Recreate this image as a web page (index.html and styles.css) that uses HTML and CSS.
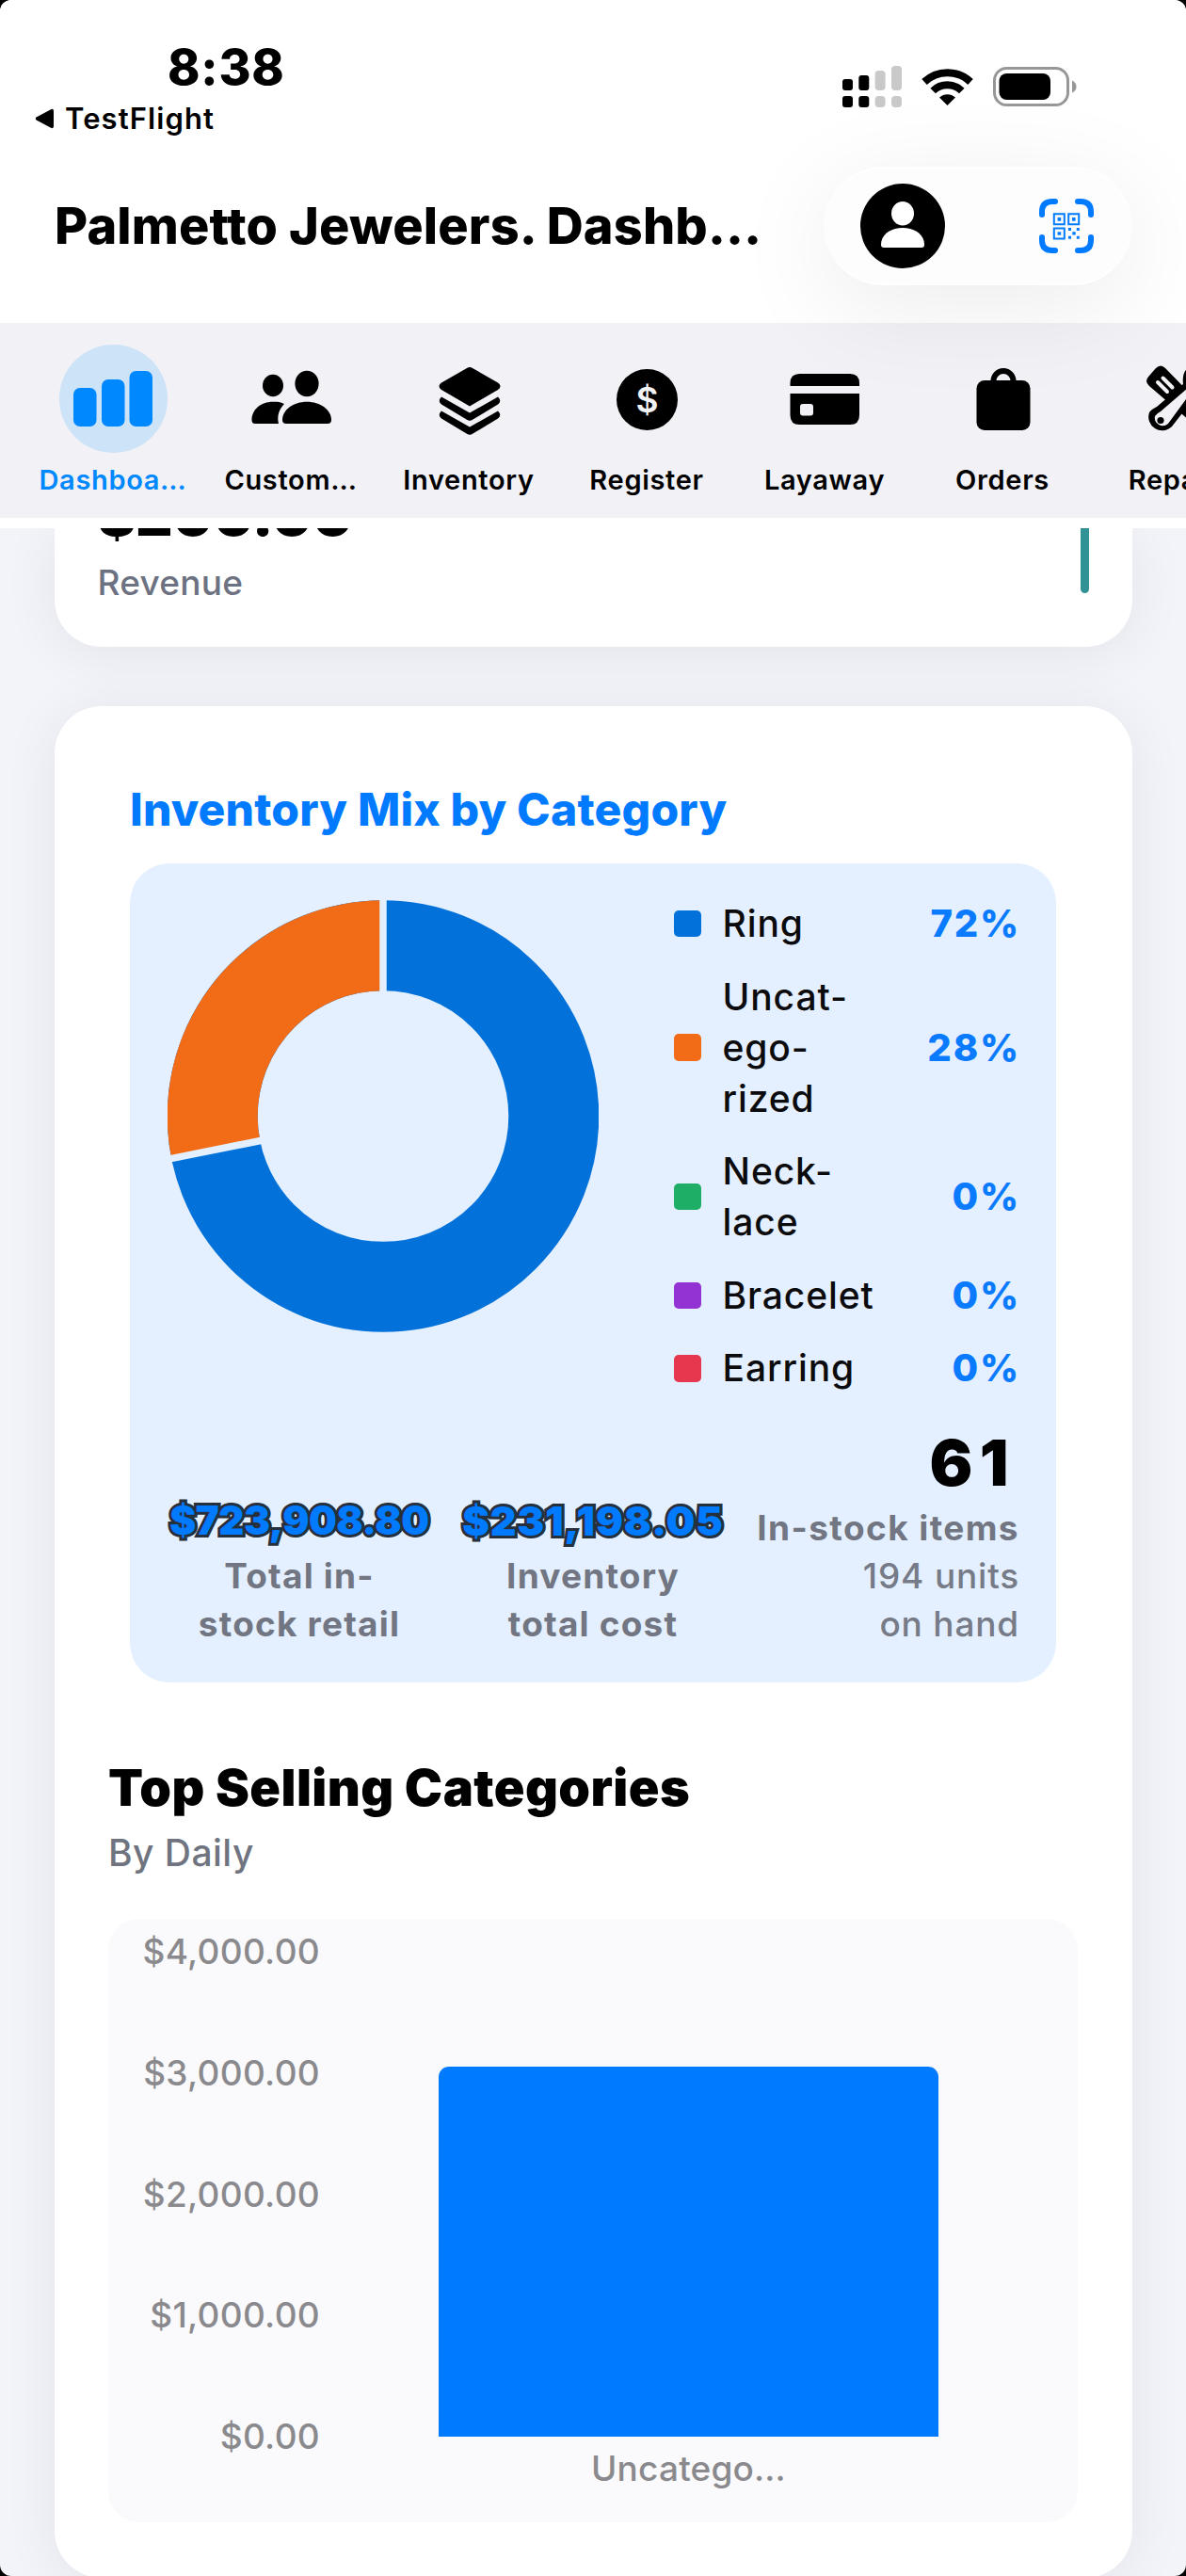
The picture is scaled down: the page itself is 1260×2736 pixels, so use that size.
FILE: index.html
```html
<!DOCTYPE html>
<html lang="en">
<head>
    <meta charset="UTF-8">
    <meta name="viewport" content="width=device-width, initial-scale=1.0">
    <title>Palmetto Jewelers. Dashboard</title>
    <link rel="stylesheet" href="styles.css">
</head>
<body>
<div class="app">
    <header class="header">
        <div class="status">
            <div class="status-left">
                <div class="time">8:38</div>
                <div class="back">
                    <svg width="21" height="22" viewBox="0 0 21 22"><path d="M2 9.2 L17 1.2 Q20 0 20 3 V19 Q20 22 17 20.8 L2 12.8 Q-.5 11 2 9.2Z"/></svg>
                    <span>TestFlight</span>
                </div>
            </div>
            <div class="status-icons">
                <svg width="63" height="44" viewBox="0 0 63 44">
                    <rect x="0" y="14" width="11" height="12" rx="3"/>
                    <rect x="17.3" y="10" width="11" height="16" rx="3"/>
                    <rect x="0" y="32" width="11" height="12" rx="3"/>
                    <rect x="17.3" y="32" width="11" height="12" rx="3"/>
                    <g fill="#c9c9c9">
                        <rect x="34.6" y="5" width="11" height="21" rx="4"/>
                        <rect x="52" y="0" width="11" height="26" rx="4"/>
                        <rect x="34.6" y="32" width="11" height="12" rx="4"/>
                        <rect x="52" y="32" width="11" height="12" rx="4"/>
                    </g>
                </svg>
                <svg width="55" height="40" viewBox="0 0 55 40">
                    <path d="M3 15 A35.5 35.5 0 0 1 52 15" fill="none" stroke="#000" stroke-width="8"/>
                    <path d="M12.2 24.5 A22 22 0 0 1 42.8 24.5" fill="none" stroke="#000" stroke-width="8"/>
                    <path d="M27.5 40 L19 31.5 A12.5 12.5 0 0 1 36 31.5Z"/>
                </svg>
                <svg width="89" height="42" viewBox="0 0 89 42">
                    <rect x="1.5" y="1.5" width="78" height="39" rx="13" fill="none" stroke="#979797" stroke-width="3"/>
                    <rect x="6.5" y="7" width="54.5" height="28" rx="8"/>
                    <path d="M84 14.5 Q88.5 16.5 88.5 21 Q88.5 25.5 84 27.5Z" fill="#979797"/>
                </svg>
            </div>
        </div>
        <div class="toolbar">
            <h1 class="title">Palmetto Jewelers. Dashb…</h1>
            <div class="pill">
                <svg width="90" height="90" viewBox="0 0 90 90">
                    <circle cx="45" cy="45" r="45"/>
                    <ellipse cx="45" cy="31.7" rx="12" ry="12.7" fill="#fff"/>
                    <path d="M22 65 C22 54 32 47 45 47 S68 54 68 65 Q68 68 65 68 H25 Q22 68 22 65Z" fill="#fff"/>
                </svg>
                <svg width="58" height="58" viewBox="0 0 58 58" fill="none" stroke="#007aff">
                    <path d="M3 17 V14 Q3 3 14 3 H17 M41 3 H44 Q55 3 55 14 V17 M55 41 V44 Q55 55 44 55 H41 M17 55 H14 Q3 55 3 44 V41" stroke-width="6" stroke-linecap="round"/>
                    <path d="M15.8 16.3 H26.8 V27.3 H15.8Z M31.2 16.3 H42.2 V27.3 H31.2Z M15.8 31.4 H26.8 V42.4 H15.8Z" stroke-width="2"/>
                    <path d="M19.6 20.1 h3.6 v3.6 h-3.6z M35 20.1 h3.6 v3.6 h-3.6z M19.6 35.2 h3.6 v3.6 h-3.6z M31 31 h3v3h-3z M39.8 31 h3v3h-3z M35.3 35.2 h3.4v3.4h-3.4z M31 39.8 h3v3h-3z M39.8 39.8 h3v3h-3z" fill="#007aff" stroke="none"/>
                </svg>
            </div>
        </div>
    </header>

    <nav class="nav">
        <a class="nav-item active">
            <svg viewBox="0 0 115 115">
                <rect x="15" y="46" width="24.5" height="41" rx="7"/>
                <rect x="45" y="37" width="24.5" height="50" rx="7"/>
                <rect x="74.5" y="28" width="24.5" height="59" rx="7"/>
            </svg>
            <span>Dashboa…</span>
        </a>
        <a class="nav-item">
            <svg viewBox="0 0 115 115">
                <ellipse cx="38" cy="43.5" rx="11" ry="11.7"/>
                <ellipse cx="74" cy="41.5" rx="12.6" ry="13.7"/>
                <path d="M50 63 C45 60.5 42 60.7 38 60.7 C25 60.7 15.5 69 15.5 80 Q15.5 84 19 84 H44 C42 76 44.5 68.5 50 63Z"/>
                <path d="M48 80 C48 69 60 60.7 74 60.7 S100 69 100 80 Q100 84 96 84 H52 Q48 84 48 80Z"/>
            </svg>
            <span>Custom…</span>
        </a>
        <a class="nav-item">
            <svg viewBox="0 0 115 115">
                <path d="M55 25 Q58 23 61 25 L88 40.5 Q93 44 88 48 L58 65.5 L28 48 Q23 44 28 40.5Z"/>
                <path d="M28 55.5 L58 72.5 L88 55.5 Q92.5 60 88 63.5 L61 79.8 Q58 81.5 55 79.8 L28 63.5 Q23.5 60 28 55.5Z"/>
                <path d="M28 70.5 L58 87.5 L88 70.5 Q92.5 75 88 78.5 L61 94.8 Q58 96.5 55 94.8 L28 78.5 Q23.5 75 28 70.5Z"/>
            </svg>
            <span>Inventory</span>
        </a>
        <a class="nav-item">
            <svg viewBox="0 0 115 115">
                <circle cx="57.5" cy="58.5" r="32.5"/>
                <text class="dollar" x="57.5" y="71.5" text-anchor="middle">$</text>
            </svg>
            <span>Register</span>
        </a>
        <a class="nav-item">
            <svg viewBox="0 0 115 115">
                <path d="M20.5 44 V41 Q20.5 31 30.5 31 H84 Q94 31 94 41 V44Z"/>
                <path fill-rule="evenodd" d="M20.5 52 H94 V75 Q94 85 84 85 H30.5 Q20.5 85 20.5 75Z M34 63 Q31 63 31 66 V72.5 Q31 75.5 34 75.5 H42 Q45 75.5 45 72.5 V66 Q45 63 42 63Z"/>
            </svg>
            <span>Layaway</span>
        </a>
        <a class="nav-item">
            <svg viewBox="0 0 115 115">
                <rect x="29.5" y="38" width="57" height="53" rx="8.5"/>
                <path d="M47.5 40 V38.5 A10.5 10.5 0 0 1 68.5 38.5 V40" fill="none" stroke="#000" stroke-width="6"/>
            </svg>
            <span>Orders</span>
        </a>
        <a class="nav-item">
            <svg viewBox="0 0 115 115">
                <path d="M24 33 L31 25 Q36 20 41 25 L94 79 L80 92 L24 44 Q18 39 24 33Z"/>
                <path d="M33 40 L43 50 M38.5 35.5 L48.5 45.5" stroke="#f1f1f6" stroke-width="4" stroke-linecap="round"/>
                <path d="M24 72 Q26 69 32 66 L60 42 Q58 26 70 22 L88 42 Q84 52 72 56 L48 87 A14.5 14.5 0 0 1 24 72Z"/>
                <path d="M30 76 Q32 73 36 71 L64 47 L68 51 L44 84 A8.5 8.5 0 0 1 30 76Z" fill="#f1f1f6"/>
                <circle cx="36" cy="80.5" r="3.6"/>
            </svg>
            <span>Repairs</span>
        </a>
    </nav>

    <main class="content">
        <section class="card revenue">
            <div class="revenue-text">
                <div class="revenue-value">$200.00</div>
                <div class="revenue-label">Revenue</div>
            </div>
            <div class="revenue-bar"></div>
        </section>

        <section class="card main-card">
            <div class="mix">
                <h2 class="mix-title">Inventory Mix by Category</h2>
                <div class="mix-panel">
                    <div class="mix-row">
                        <svg class="donut" width="458" height="459" viewBox="-229 -229.5 458 459">
                            <g fill="none" stroke-width="96">
                                <circle r="181.3" stroke="#0272da"/>
                                <circle r="181.3" stroke="#f26c18" pathLength="100" stroke-dasharray="28.1 71.9" transform="rotate(168.7)"/>
                            </g>
                            <path d="M0 -120 V-232 M-117.7 23.5 L-228 45.6" stroke="#e4f0ff" stroke-width="7.5"/>
                        </svg>
                        <ul class="legend">
                            <li><i class="swatch blue"></i><span>Ring</span><b>72%</b></li>
                            <li><i class="swatch orange"></i><span>Uncat-<br>ego-<br>rized</span><b>28%</b></li>
                            <li><i class="swatch green"></i><span>Neck-<br>lace</span><b>0%</b></li>
                            <li><i class="swatch purple"></i><span>Bracelet</span><b>0%</b></li>
                            <li><i class="swatch red"></i><span>Earring</span><b>0%</b></li>
                        </ul>
                    </div>
                    <div class="totals">
                        <div class="total">
                            <div class="amount">$723,908.80</div>
                            <div class="total-label">Total in-<br>stock retail</div>
                        </div>
                        <div class="total">
                            <div class="amount cost">$231,198.05</div>
                            <div class="total-label">Inventory<br>total cost</div>
                        </div>
                        <div class="stock">
                            <div class="stock-count">61</div>
                            <div class="stock-label">In-stock items</div>
                            <div class="stock-units">194 units<br>on hand</div>
                        </div>
                    </div>
                </div>
            </div>

            <h2 class="top-title">Top Selling Categories</h2>
            <p class="top-sub">By Daily</p>
            <div class="chart">
                <div class="y-axis">
                    <span>$4,000.00</span>
                    <span>$3,000.00</span>
                    <span>$2,000.00</span>
                    <span>$1,000.00</span>
                    <span>$0.00</span>
                </div>
                <div class="plot">
                    <div class="plot-area"><div class="bar" style="height: 393px"></div></div>
                    <div class="x-label">Uncatego…</div>
                </div>
            </div>
        </section>
    </main>
</div>
</body>
</html>
```
FILE: styles.css
```css
* {
    box-sizing: border-box;
}

body {
    margin: 0;
    background: #000;
    font-family: Inter, "Liberation Sans", sans-serif;
    color: #000;
}

h1, h2, p, ul {
    margin: 0;
    padding: 0;
}

svg {
    display: block;
    flex: none;
}

.app {
    width: 1260px;
    height: 2736px;
    overflow: hidden;
    border-radius: 12px;
    background: #f3f4f9;
}

/* header */
.header {
    height: 343px;
    background: #fff;
}

.status {
    display: flex;
    justify-content: space-between;
    height: 177px;
    padding: 42px 116px 0 37px;
}

.time {
    margin-left: 141px;
    font-size: 52px;
    font-weight: 800;
    line-height: 60px;
    letter-spacing: 0.015em;
}

.back {
    display: flex;
    align-items: center;
    gap: 11px;
    margin-top: 4px;
    font-size: 31px;
    font-weight: 600;
    line-height: 40px;
    letter-spacing: 0.035em;
}

.status-icons {
    display: flex;
    align-items: center;
    gap: 21px;
    height: 44px;
    margin-top: 28px;
}

.toolbar {
    display: flex;
    align-items: center;
    justify-content: space-between;
    height: 126px;
    padding: 0 57px;
}

.title {
    padding-left: 1px;
    font-size: 54px;
    font-weight: 800;
    line-height: 64px;
    letter-spacing: 0.003em;
    white-space: nowrap;
}

.pill {
    position: relative;
    z-index: 2;
    display: flex;
    align-items: center;
    justify-content: space-between;
    width: 328px;
    height: 126px;
    padding: 0 41px 0 39px;
    border: 2px solid #fff;
    border-width: 2px 0;
    border-radius: 63px;
    background: #fdfdfd;
    box-shadow: 0 22px 110px rgba(0, 0, 0, 0.08);
}

/* navigation strip */
.nav {
    display: flex;
    gap: 30px;
    height: 218px;
    padding: 23px 0 0 40.5px;
    overflow: hidden;
    border-bottom: 11.5px solid #fff;
    background: #f1f1f6;
}

.nav-item {
    flex: none;
    width: 159px;
    font-size: 29px;
    font-weight: 600;
    line-height: 34px;
    letter-spacing: 0.023em;
    text-align: center;
    text-indent: 0.06em;
}

.nav-item svg {
    width: 115px;
    height: 115px;
    margin: 0 auto 12px;
}

.nav-item.active {
    color: #08f;
}

.nav-item.active svg {
    border-radius: 50%;
    background: #cde3f8;
    fill: #08f;
}

.dollar {
    font-size: 37px;
    font-weight: 600;
    letter-spacing: 0;
    fill: #f1f1f6;
}

/* cards */
.content {
    padding: 0 57.5px;
}

.card {
    border-radius: 50px;
    background: #fff;
    box-shadow: 0 6px 60px rgba(0, 0, 0, 0.07);
}

.revenue {
    display: flex;
    justify-content: space-between;
    height: 126px;
    padding: 0 46px;
    border-radius: 0 0 50px 50px;
    clip-path: inset(0 -80px -80px -80px);
}

/* scrolled half under the navigation */
.revenue-text {
    height: 126px;
    overflow: hidden;
}

.revenue-value {
    margin-top: -50px;
    font-size: 61px;
    font-weight: 900;
    line-height: 72px;
    letter-spacing: -0.002em;
}

.revenue-label {
    margin-top: 14px;
    font-size: 37px;
    font-weight: 500;
    line-height: 44px;
    letter-spacing: 0.006em;
    color: #6c7281;
}

.revenue-bar {
    width: 9px;
    height: 69px;
    border-radius: 0 0 5px 5px;
    background: #309295;
}

.main-card {
    height: 1988px;
    margin-top: 63px;
    padding: 80px 57.5px 0;
}

.mix {
    padding: 0 23px;
}

.mix-title {
    font-size: 48px;
    font-weight: 800;
    line-height: 60px;
    letter-spacing: 0.004em;
    color: #007aff;
}

.mix-panel {
    height: 870px;
    margin-top: 27px;
    padding: 37px 39px 0 40px;
    border-radius: 42px;
    background: #e4f0ff;
}

.mix-row {
    display: flex;
    justify-content: space-between;
}

.donut {
    margin-top: 2px;
}

.legend {
    display: flex;
    flex-direction: column;
    gap: 23.6px;
    width: 367px;
    list-style: none;
}

.legend li {
    display: flex;
    align-items: center;
    font-size: 39px;
    font-weight: 500;
    line-height: 54px;
    letter-spacing: 0.023em;
    color: #0b0b0d;
}

.legend b {
    margin-left: auto;
    margin-right: -1px;
    font-size: 40px;
    font-weight: 800;
    letter-spacing: 0.045em;
    color: #0a7bff;
}

.swatch {
    width: 29px;
    height: 28.5px;
    margin-right: 22.5px;
    border-radius: 5px;
}

.blue { background: #0272da; }
.orange { background: #f26c18; }
.green { background: #1eae65; }
.purple { background: #9333d3; }
.red { background: #e5374e; }

.totals {
    display: flex;
    align-items: flex-end;
    gap: 32px;
    margin-top: 33px;
}

.total {
    width: 280px;
    text-align: center;
}

.amount {
    margin: 0 -10px 3px;
    font-size: 42px;
    font-weight: 900;
    line-height: 60px;
    letter-spacing: -0.012em;
    white-space: nowrap;
    color: #007aff;
    -webkit-text-stroke: 6px #26303c;
    paint-order: stroke fill;
}

.amount.cost {
    font-size: 43px;
    letter-spacing: 0.022em;
}

.total-label,
.stock-label,
.stock-units {
    font-size: 37px;
    font-weight: 700;
    line-height: 51px;
    letter-spacing: 0.032em;
    color: #727682;
}

.stock {
    flex: 1;
    text-align: right;
    white-space: nowrap;
}

.stock-count {
    margin-bottom: 4px;
    padding-right: 4px;
    font-size: 68px;
    font-weight: 900;
    line-height: 80px;
    letter-spacing: 0.11em;
}

.stock-label {
    letter-spacing: 0.038em;
}

.stock-units {
    font-weight: 500;
    letter-spacing: 0.022em;
    color: #767b87;
}

/* top selling */
.top-title {
    margin-top: 80px;
    font-size: 54px;
    font-weight: 900;
    line-height: 64px;
    letter-spacing: 0.008em;
}

.top-sub {
    margin-top: 14px;
    font-size: 39px;
    font-weight: 500;
    line-height: 46px;
    letter-spacing: 0.012em;
    color: #6f7480;
}

.chart {
    display: flex;
    height: 641px;
    margin-top: 47px;
    padding-top: 13px;
    border-radius: 33px;
    background: #fafafc;
    font-size: 37px;
    font-weight: 500;
    line-height: 44px;
    letter-spacing: 0.008em;
    color: #8a8a8e;
}

.y-axis {
    display: flex;
    flex-direction: column;
    justify-content: space-between;
    width: 225px;
    height: 559px;
    text-align: right;
}

.plot {
    width: 531px;
    margin-left: 126px;
}

.plot-area {
    display: flex;
    align-items: flex-end;
    height: 537px;
}

.bar {
    width: 100%;
    border-radius: 11px 11px 0 0;
    background: #007aff;
}

.x-label {
    margin-top: 12px;
    text-align: center;
    letter-spacing: 0.005em;
}
```
